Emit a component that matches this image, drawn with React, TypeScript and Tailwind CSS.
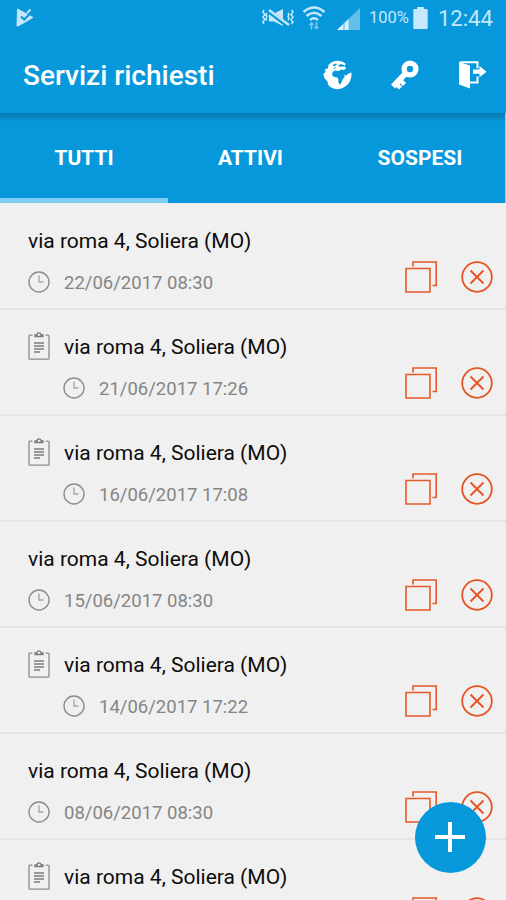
import React from 'react';

const services = [
    { id: 1, address: 'via roma 4, Soliera (MO)', date: '22/06/2017 08:30', note: false },
    { id: 2, address: 'via roma 4, Soliera (MO)', date: '21/06/2017 17:26', note: true },
    { id: 3, address: 'via roma 4, Soliera (MO)', date: '16/06/2017 17:08', note: true },
    { id: 4, address: 'via roma 4, Soliera (MO)', date: '15/06/2017 08:30', note: false },
    { id: 5, address: 'via roma 4, Soliera (MO)', date: '14/06/2017 17:22', note: true },
    { id: 6, address: 'via roma 4, Soliera (MO)', date: '08/06/2017 08:30', note: false },
    { id: 7, address: 'via roma 4, Soliera (MO)', date: '', note: true },
];

const PlayIcon = () => (
    <svg className="h-5 w-[19px]" viewBox="0 0 19 20">
        <path d="M1.5 1L17 9.5 2 18H1z" fill="#c5e8fa" stroke="#c5e8fa" strokeWidth="1" strokeLinejoin="round" />
        <path d="M5 8.5l3.2 3L15.5 4" fill="none" stroke="#0798db" strokeWidth="2" />
        <path d="M11 5l3.5-3.500" stroke="#c5e8fa" strokeWidth="2" />
    </svg>
);

const MutedIcon = () => (
    <svg className="h-5 w-8" viewBox="0 0 32 20" fill="none" stroke="#c5e8fa">
        <path d="M7 5.500h5L21 1v17l-9-4.500H7z" fill="#c5e8fa" stroke="none" />
        <path d="M5.500 2L26 18" stroke="#0798db" strokeWidth="4.500" />
        <path d="M7 2L27 17" strokeWidth="2.400" />
        <path d="M2 2l-1.200 2L3 6.500.8 9 3 11.500.8 14 2 16M5 5l-1 1.500 1 2-1 2 1 2M29.500 2l1.500 2-2 2.500L31 9l-2 2.500 2 2.500-1.500 2M26 5l1 1.500-1 2 1 2-1 2" strokeWidth="1.500" />
    </svg>
);

const WifiIcon = () => (
    <svg className="h-6 w-6" viewBox="0 0 24 24" fill="none" stroke="#c5e8fa" strokeWidth="2.600">
        <path d="M1.500 6Q12-3 22.500 6M4.500 10Q12 3.500 19.500 10M8 14q4-3.500 8 0" />
        <path d="M9.500 23.500v-6M7.500 19l2-2 2 2M14.500 16v6M12.500 20.500l2 2 2-2" stroke="#79c8ee" strokeWidth="1.600" />
    </svg>
);

const SignalIcon = () => (
    <svg className="h-[22px] w-[23px]" viewBox="0 0 23 22">
        <path d="M0 22L23 0v22z" fill="#62bfe9" />
        <path d="M0 22L11.500 11v11z" fill="#d9f1fc" />
        <path d="M7 15v7" stroke="#4db4e4" strokeWidth="1" />
    </svg>
);

const BatteryIcon = () => (
    <svg className="h-[22px] w-[15px]" viewBox="0 0 15 23" fill="#c5e8fa">
        <path d="M4 0h7v2h3q1 0 1 1v19q0 1-1 1H1q-1 0-1-1V3q0-1 1-1h3z" />
    </svg>
);

const GlobeIcon = () => (
    <svg className="h-[30px] w-[29px]" viewBox="0 0 29 30">
        <path d="M5.500 5Q9.500.8 15 .8q4.500.2 7.500 2.700l-.5 2-4-1.500-3 1.500 1.500 1.200L22 6.500l1 2-2 1.500-2.500-.5-3 1.500-4-.5L9.500 12.500 9 15l2 2 3.500.5.800 2 .200 3.500 1.500 1.500 1.500-2 1-3 2.500-3-1.500-1.500 3 .5 1.500-1.700L28.500 12.500q.3 6.500-2.800 10.800Q21 29 14.500 29.200 8 28.800 5 24.500L4.500 21.500 1.300 18 .3 14 2.500 12 2 9l3-.5z" fill="#fff" />
        <path d="M9.500 5l3.500-1.500 1 1L11 6.500zM10 8l3-.7-1 1.500z" fill="#0798db" />
    </svg>
);

const KeyIcon = () => (
    <svg className="h-[30px] w-7" viewBox="0 0 28 30" fill="none" stroke="#fff">
        <circle cx="19" cy="9" r="5.900" strokeWidth="5.400" />
        <path d="M14.500 13.500L2 26.500" strokeWidth="5.800" />
        <path d="M9 20l4.500 4.500M5 23.500l4.500 4.500" strokeWidth="4.400" />
    </svg>
);

const ExitIcon = () => (
    <svg className="h-7 w-7" viewBox="0 0 28 28">
        <path d="M0 1l11 3.500V27.500L0 23.500z" fill="#fff" />
        <path d="M1 1.200h17.500v6M11 21.500h7.500v-6" fill="none" stroke="#fff" strokeWidth="2" />
        <path d="M14 8.500h6.500V5l7 5.700-7 5.500v-3.500H14z" fill="#fff" />
    </svg>
);

const ClockIcon = () => (
    <svg className="h-[22px] w-[22px] shrink-0" viewBox="0 0 22 22" fill="none" stroke="#8c8c8c" strokeWidth="1.400">
        <circle cx="11" cy="11" r="10" />
        <path d="M11 4.500V11h4.500" stroke="#a8a8a8" />
    </svg>
);

const ClipboardIcon = () => (
    <svg className="h-7 w-[22px] shrink-0" viewBox="0 0 22 28" fill="none" stroke="#7c7c7c" strokeWidth="1.300">
        <path d="M4.500 3.200H2q-1 0-1 1v22q0 1 1 1h18q1 0 1-1v-22q0-1-1-1h-2.500" stroke="#8c8c8c" />
        <path d="M7 4.500V3h2q0-2.200 2-2.200T13 3h2v1.500z" />
        <path d="M6 11h10M6 14h10M6 17h10M6 20h6" />
    </svg>
);

const CopyIcon = () => (
    <svg className="h-8 w-8" viewBox="0 0 32 32" fill="none" stroke="#e55a2b" strokeWidth="1.600">
        <path d="M1 7.500h24v23.500H1z" />
        <path d="M8 5.500V1h23.200v23.500H27.500" />
    </svg>
);

const CancelIcon = () => (
    <svg className="h-8 w-8" viewBox="0 0 32 32" fill="none" stroke="#e55321" strokeWidth="1.800">
        <circle cx="16" cy="16" r="14.800" />
        <path d="M9.500 9.500l13 13M22.500 9.500l-13 13" />
    </svg>
);

const ServiceRow = ({ service }) => (
    <li className="flex h-[106px] shrink-0 items-start border-b-2 border-[#e4e4e4] pl-7">
        <div className="flex-1 pt-5">
            <div className="flex h-8 items-center gap-[14px]">
                {service.note && <ClipboardIcon />}
                <span className="whitespace-nowrap pt-[3px] text-[21px] text-[#0c0c0c]">{service.address}</span>
            </div>
            <div className={service.note ? 'mt-[10px] flex h-8 items-center gap-[14px] pl-[35px]' : 'mt-[10px] flex h-8 items-center gap-[14px]'}>
                {service.date && (
                    <>
                        <ClockIcon />
                        <span className="whitespace-nowrap pt-[3px] text-[18.500px] text-[#858585]">{service.date}</span>
                    </>
                )}
            </div>
        </div>
        <div className="flex gap-6 pt-[57px] pr-[13px]">
            <CopyIcon />
            <CancelIcon />
        </div>
    </li>
);

const App = () => {
    return (
        <div className="relative flex h-[900px] w-[506px] flex-col overflow-hidden bg-[#f0f0f0] font-[Roboto,sans-serif]">
            {/* Status bar */}
            <div className="flex h-9 shrink-0 items-center bg-[#0798db] pl-4 text-[#c5e8fa]">
                <PlayIcon />
                <div className="ml-auto flex items-center pr-[13px]">
                    <MutedIcon />
                    <div className="ml-2 flex"><WifiIcon /></div>
                    <div className="ml-[11px] flex pt-px"><SignalIcon /></div>
                    <span className="ml-[9px] w-10 whitespace-nowrap pt-px text-[16.500px]">100%</span>
                    <div className="ml-[4px] flex"><BatteryIcon /></div>
                    <span className="ml-[10px] w-[55px] whitespace-nowrap text-[22px]">12:44</span>
                </div>
            </div>

            {/* Title bar */}
            <header className="flex h-[77px] shrink-0 items-center bg-[#0798db] pl-[23px] pr-[19px]">
                <h1 className="flex-1 pt-[2px] text-[28px] font-medium text-white">Servizi richiesti</h1>
                <div className="flex items-center">
                    <GlobeIcon />
                    <div className="ml-[39px]"><KeyIcon /></div>
                    <div className="ml-10"><ExitIcon /></div>
                </div>
            </header>

            {/* Tabs */}
            <nav className="flex h-[90px] shrink-0 border-r border-[#8fcdeb] bg-[#0798db] bg-linear-to-b from-[#0679ae] to-[#0798db] to-[9px] text-[21px] font-bold text-white">
                <a className="flex w-[168px] items-center justify-center border-b-[5px] border-[#7fcdf3] pt-[7px]">TUTTI</a>
                <a className="flex w-[165px] items-center justify-center pt-[2px]">ATTIVI</a>
                <a className="flex w-[172px] items-center justify-center pt-[2px] pl-[2px]">SOSPESI</a>
            </nav>

            <ul className="flex flex-col pt-px">
                {services.map((service) => (
                    <ServiceRow key={service.id} service={service} />
                ))}
            </ul>

            {/* Add button */}
            <button className="absolute left-[415px] top-[802px] flex h-[71px] w-[71px] items-center justify-center rounded-full bg-[#0798db] pr-px pb-px">
                <svg className="h-[30px] w-[30px]" viewBox="0 0 30 30" stroke="#fff" strokeWidth="4">
                    <path d="M15 0v30M0 15h30" />
                </svg>
            </button>
        </div>
    );
};

export default App;
